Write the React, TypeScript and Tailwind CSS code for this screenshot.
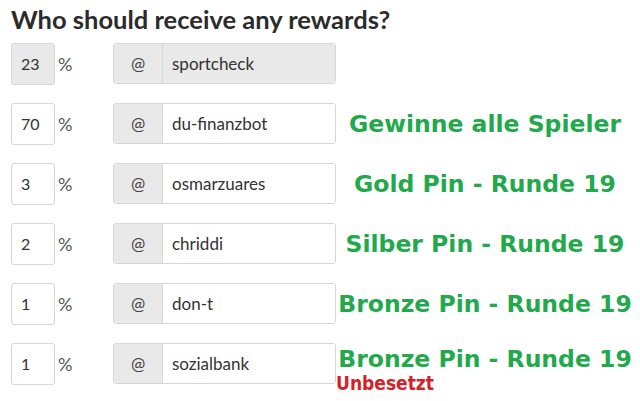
const rows = [
  { pct: "23", user: "sportcheck", disabled: true, label: "" },
  { pct: "70", user: "du-finanzbot", label: "Gewinne alle Spieler" },
  { pct: "3", user: "osmarzuares", label: "Gold Pin - Runde 19" },
  { pct: "2", user: "chriddi", label: "Silber Pin - Runde 19" },
  { pct: "1", user: "don-t", label: "Bronze Pin - Runde 19" },
  { pct: "1", user: "sozialbank", label: "Bronze Pin - Runde 19", note: "Unbesetzt" },
];

export default function App() {
  return (
    <div className="w-[640px] h-[401px] bg-white overflow-hidden pl-[11px] pt-[2px] font-['Lato',sans-serif] text-[#333]">
      <h1 className="text-[25.5px] leading-[34px] font-bold text-[#2b2b2b]">Who should receive any rewards?</h1>
      <div className="mt-[7px] flex flex-col gap-[18px]">
        {rows.map((r, i) => (
          <div key={i} className="flex items-start h-[42px]">
            <div
              className={`shrink-0 w-[44px] h-[42px] border border-[#d6d6d6] rounded-[3px] flex items-center pl-[9px] text-[16px] ${
                r.disabled ? "bg-[#e9e9e9]" : "bg-white"
              }`}
            >
              {r.pct}
            </div>
            <span className="shrink-0 ml-[3px] mt-[8px] text-[18px] text-[#555] w-[55px]">%</span>
            <div className="shrink-0 w-[223px] h-[41px] border border-[#d6d6d6] rounded-[3px] flex overflow-hidden">
              <div className="w-[49px] bg-[#e9e9e9] border-r border-[#d6d6d6] flex items-center justify-center text-[17px] text-[#444]">
                @
              </div>
              <div
                className={`flex-1 flex items-center pl-[9px] text-[17px] ${
                  r.disabled ? "bg-[#e9e9e9]" : "bg-white"
                }`}
              >
                {r.user}
              </div>
            </div>
            {r.label && (
              <div
                className={`flex-1 pr-[6px] flex flex-col items-center font-['DejaVu_Sans',sans-serif] font-bold ${
                  r.note ? "mt-[2px]" : "h-[42px] justify-center"
                }`}
              >
                <div className="text-[23.5px] leading-[28px] text-[#22a94b] whitespace-nowrap">{r.label}</div>
                {r.note && (
                  <div className="self-start text-[19px] leading-[20px] text-[#d62028] font-['DejaVu_Sans_Condensed','DejaVu_Sans',sans-serif]">
                    {r.note}
                  </div>
                )}
              </div>
            )}
          </div>
        ))}
      </div>
    </div>
  );
}
